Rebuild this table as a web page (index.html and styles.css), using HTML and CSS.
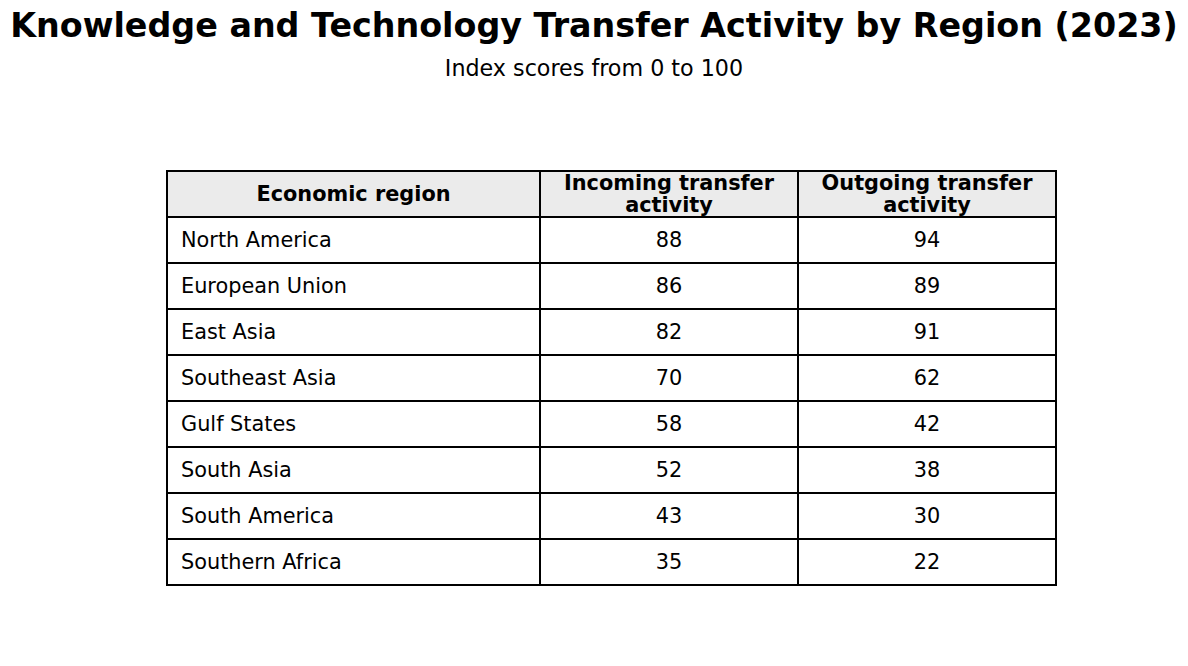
FILE: index.html
```html
<!DOCTYPE html>
<html>
<head>
<meta charset="utf-8">
<link rel="stylesheet" href="styles.css">
</head>
<body>
<div class="page">
  <h1 class="title">Knowledge and Technology Transfer Activity by Region (2023)</h1>
  <p class="subtitle">Index scores from 0 to 100</p>
  <table class="data">
    <colgroup>
      <col class="c1"><col class="c2"><col class="c3">
    </colgroup>
    <thead>
      <tr>
        <th>Economic region</th>
        <th>Incoming transfer<br>activity</th>
        <th>Outgoing transfer<br>activity</th>
      </tr>
    </thead>
    <tbody>
      <tr><td class="name">North America</td><td>88</td><td>94</td></tr>
      <tr><td class="name">European Union</td><td>86</td><td>89</td></tr>
      <tr><td class="name">East Asia</td><td>82</td><td>91</td></tr>
      <tr><td class="name">Southeast Asia</td><td>70</td><td>62</td></tr>
      <tr><td class="name">Gulf States</td><td>58</td><td>42</td></tr>
      <tr><td class="name">South Asia</td><td>52</td><td>38</td></tr>
      <tr><td class="name">South America</td><td>43</td><td>30</td></tr>
      <tr><td class="name">Southern Africa</td><td>35</td><td>22</td></tr>
    </tbody>
  </table>
</div>
</body>
</html>
```
FILE: styles.css
```css
html, body {
  margin: 0;
  padding: 0;
  background: #ffffff;
}
.page {
  width: 1188px;
  height: 666px;
  font-family: "DejaVu Sans", sans-serif;
  color: #000;
  overflow: hidden;
}
.title {
  margin: 6px 0 0 0;
  font-size: 33.33px;
  line-height: 40px;
  font-weight: bold;
  text-align: center;
  white-space: nowrap;
}
.subtitle {
  margin: 9px 0 0 0;
  font-size: 22.22px;
  line-height: 26px;
  text-align: center;
}
.data {
  margin: 89px 0 0 166px;
  border-collapse: collapse;
  table-layout: fixed;
  width: 891px;
  font-size: 20.83px;
}
.c1 { width: 373px; }
.c2 { width: 258px; }
.c3 { width: 258px; }
.data th, .data td {
  border: 2px solid #000;
  height: 46px;
  box-sizing: border-box;
  padding: 0;
  text-align: center;
  vertical-align: middle;
}
.data th {
  background: #ebebeb;
  font-weight: bold;
  line-height: 22px;
}
.data td {
  line-height: 24px;
}
.data td.name {
  text-align: left;
  padding-left: 13px;
}
```
